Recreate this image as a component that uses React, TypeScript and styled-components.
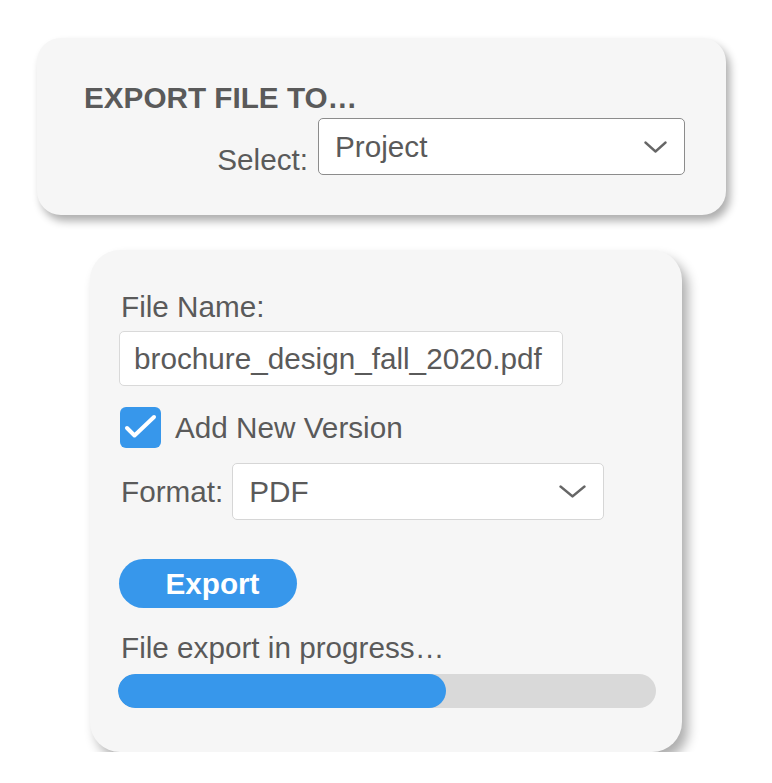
import styled, { createGlobalStyle } from "styled-components";

const GlobalStyle = createGlobalStyle`
  body {
    margin: 0;
    background: #ffffff;
    font-family: "Liberation Sans", Arial, sans-serif;
    color: #5a5a5a;
  }
`;

const Chevron = ({ w, h }: { w: number; h: number }) => (
  <svg width={w} height={h} viewBox="0 0 24 12" fill="none" preserveAspectRatio="none">
    <path d="M1.5 1.5 L12 10.5 L22.5 1.5" stroke="#666666" strokeWidth="2.4" strokeLinecap="round" strokeLinejoin="round" />
  </svg>
);

const progress = 0.61;

const App = () => {
  return (
    <>
      <GlobalStyle />
      <Page>
        <TargetCard>
          <Title>EXPORT FILE TO…</Title>
          <SelectRow>
            <BottomLabel>Select:</BottomLabel>
            <SelectBox $width={367} $dark>
              <span>Project</span>
              <Chevron w={23} h={12} />
            </SelectBox>
          </SelectRow>
        </TargetCard>

        <OptionsCard>
          <FieldLabel>File Name:</FieldLabel>
          <TextInput>brochure_design_fall_2020.pdf</TextInput>

          <CheckRow>
            <CheckBox>
              <svg width="41" height="41" viewBox="0 0 41 41" fill="none">
                <path d="M7 21 L14.5 28.5 L34 10" stroke="#ffffff" strokeWidth="4" strokeLinecap="round" strokeLinejoin="round" />
              </svg>
            </CheckBox>
            <Label>Add New Version</Label>
          </CheckRow>

          <FormatRow>
            <Label>Format:</Label>
            <SelectBox $width={372}>
              <span>PDF</span>
              <Chevron w={27} h={13} />
            </SelectBox>
          </FormatRow>

          <ExportButton>Export</ExportButton>

          <Status>File export in progress…</Status>
          <Track>
            <Fill style={{ width: `${progress * 100}%` }} />
          </Track>
        </OptionsCard>
      </Page>
    </>
  );
};

export default App;

const Page = styled.div`
  display: flex;
  flex-direction: column;
  align-items: flex-start;
  gap: 35px;
  padding: 38px 0 0 37px;
`;

const Card = styled.div`
  background: #f6f6f6;
  box-sizing: border-box;
  display: flex;
  flex-direction: column;
  align-items: flex-start;
`;

const TargetCard = styled(Card)`
  width: 689px;
  height: 177px;
  padding: 43px 41px 40px 47px;
  border-radius: 24px;
  box-shadow: 4px 6px 9px rgba(0, 0, 0, 0.32);
`;

const OptionsCard = styled(Card)`
  width: 592px;
  height: 502px;
  margin-left: 53px;
  padding: 40px 26px 44px 29px;
  border-radius: 30px;
  box-shadow: 6px 8px 12px rgba(0, 0, 0, 0.32);
`;

const Title = styled.h1`
  margin: 0;
  font-size: 29.7px;
  line-height: 34px;
  font-weight: 700;
  color: #5a5a5a;
`;

const SelectRow = styled.div`
  align-self: stretch;
  display: flex;
  justify-content: flex-end;
  align-items: flex-end;
  gap: 10px;
  margin-top: 3px;
`;

const Label = styled.span`
  font-size: 29.7px;
  line-height: 34px;
  white-space: nowrap;
`;

const BottomLabel = styled(Label)`
  line-height: 30px;
`;

const FieldLabel = styled(Label)`
  margin-left: 2px;
`;

const SelectBox = styled.div<{ $width: number; $dark?: boolean }>`
  box-sizing: border-box;
  width: ${({ $width }) => $width}px;
  height: 57px;
  display: flex;
  align-items: center;
  justify-content: space-between;
  padding: 0 17px 0 16px;
  background: #ffffff;
  border: 1px solid ${({ $dark }) => ($dark ? "#8c8c8c" : "#d6d6d6")};
  border-radius: 5px;
  font-size: 29.7px;
  line-height: 34px;
`;

const TextInput = styled.div`
  box-sizing: border-box;
  width: 444px;
  height: 55px;
  margin-top: 7px;
  display: flex;
  align-items: center;
  padding: 0 10px 0 14px;
  background: #ffffff;
  border: 1px solid #d9d9d9;
  border-radius: 5px;
  font-size: 29.7px;
  line-height: 34px;
  white-space: nowrap;
`;

const CheckRow = styled.div`
  display: flex;
  align-items: center;
  gap: 14px;
  margin-top: 21px;
  margin-left: 1px;
`;

const CheckBox = styled.div`
  width: 41px;
  height: 41px;
  border-radius: 6px;
  background: #3797eb;
  display: flex;
`;

const FormatRow = styled.div`
  display: flex;
  align-items: center;
  gap: 9px;
  margin-top: 15px;
  margin-left: 2px;
`;

const ExportButton = styled.button`
  width: 178px;
  height: 49px;
  margin-top: 39px;
  padding: 0 0 0 9px;
  border: none;
  border-radius: 25px;
  background: #3797eb;
  color: #ffffff;
  font-family: "Liberation Sans", Arial, sans-serif;
  font-size: 29.7px;
  font-weight: 700;
  line-height: 34px;
`;

const Status = styled(Label)`
  margin-top: 23px;
  margin-left: 2px;
`;

const Track = styled.div`
  align-self: stretch;
  height: 34px;
  margin-top: 9px;
  margin-left: -1px;
  border-radius: 17px;
  background: #d9d9d9;
  overflow: hidden;
`;

const Fill = styled.div`
  height: 100%;
  border-radius: 17px;
  background: #3797eb;
`;
